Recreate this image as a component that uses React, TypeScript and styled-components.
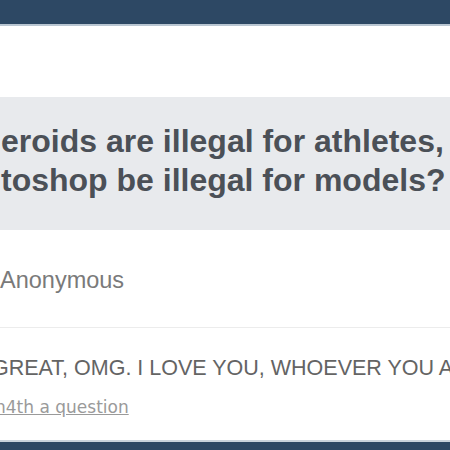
import React from "react";
import styled, { createGlobalStyle } from "styled-components";

const Global = createGlobalStyle`
  html, body { margin: 0; padding: 0; background: #ffffff; }
  body { width: 450px; height: 450px; overflow: hidden; font-family: "Liberation Sans", Arial, sans-serif; }
`;

const Page = styled.div`
  width: 450px;
  height: 450px;
  display: flex;
  flex-direction: column;
  overflow: hidden;
`;

const TopBar = styled.div`
  height: 24px;
  flex: none;
  background: #2d4864;
  border-bottom: 2px solid #b9c6d2;
`;

const Card = styled.div`
  flex: 1;
  display: flex;
  flex-direction: column;
  background: #ffffff;
  border-bottom: 2px solid #c9d3dc;
  overflow: hidden;
`;

const Question = styled.div`
  margin-top: 71px;
  height: 133px;
  flex: none;
  background: #e8eaed;
  display: flex;
  flex-direction: column;
  padding-top: 25px;
  box-sizing: border-box;
`;

const QLine = styled.div`
  margin-left: 1px;
  font-weight: bold;
  font-size: 32px;
  line-height: 39px;
  color: #4b5057;
  white-space: nowrap;
`;

const Asker = styled.div`
  margin-top: 36px;
  font-size: 23.5px;
  color: #7a7a7a;
  line-height: 28px;
  white-space: nowrap;
`;

const Divider = styled.div`
  margin-top: 33px;
  height: 1px;
  flex: none;
  background: #ececec;
`;

const Answer = styled.div`
  margin-top: 28px;
  margin-left: -8px;
  font-size: 21.5px;
  color: #646464;
  white-space: nowrap;
  line-height: 25px;
`;

const Meta = styled.div`
  margin-top: 16px;
  margin-left: -5px;
  font-family: "DejaVu Sans", Verdana, sans-serif;
  font-size: 17px;
  line-height: 20px;
  white-space: nowrap;
`;

const MetaLink = styled.a`
  color: #9a9a9a;
  text-decoration: underline;
`;

const BottomBar = styled.div`
  height: 8px;
  flex: none;
  background: #2d4864;
`;

export default function App() {
  return (
    <Page>
      <Global />
      <TopBar />
      <Card>
        <Question>
          <QLine>eroids are illegal for athletes,</QLine>
          <QLine>toshop be illegal for models?</QLine>
        </Question>
        <Asker>Anonymous</Asker>
        <Divider />
        <Answer>GREAT, OMG. I LOVE YOU, WHOEVER YOU ARE</Answer>
        <Meta>
          <MetaLink href="#">n4th a question</MetaLink>
        </Meta>
      </Card>
      <BottomBar />
    </Page>
  );
}
